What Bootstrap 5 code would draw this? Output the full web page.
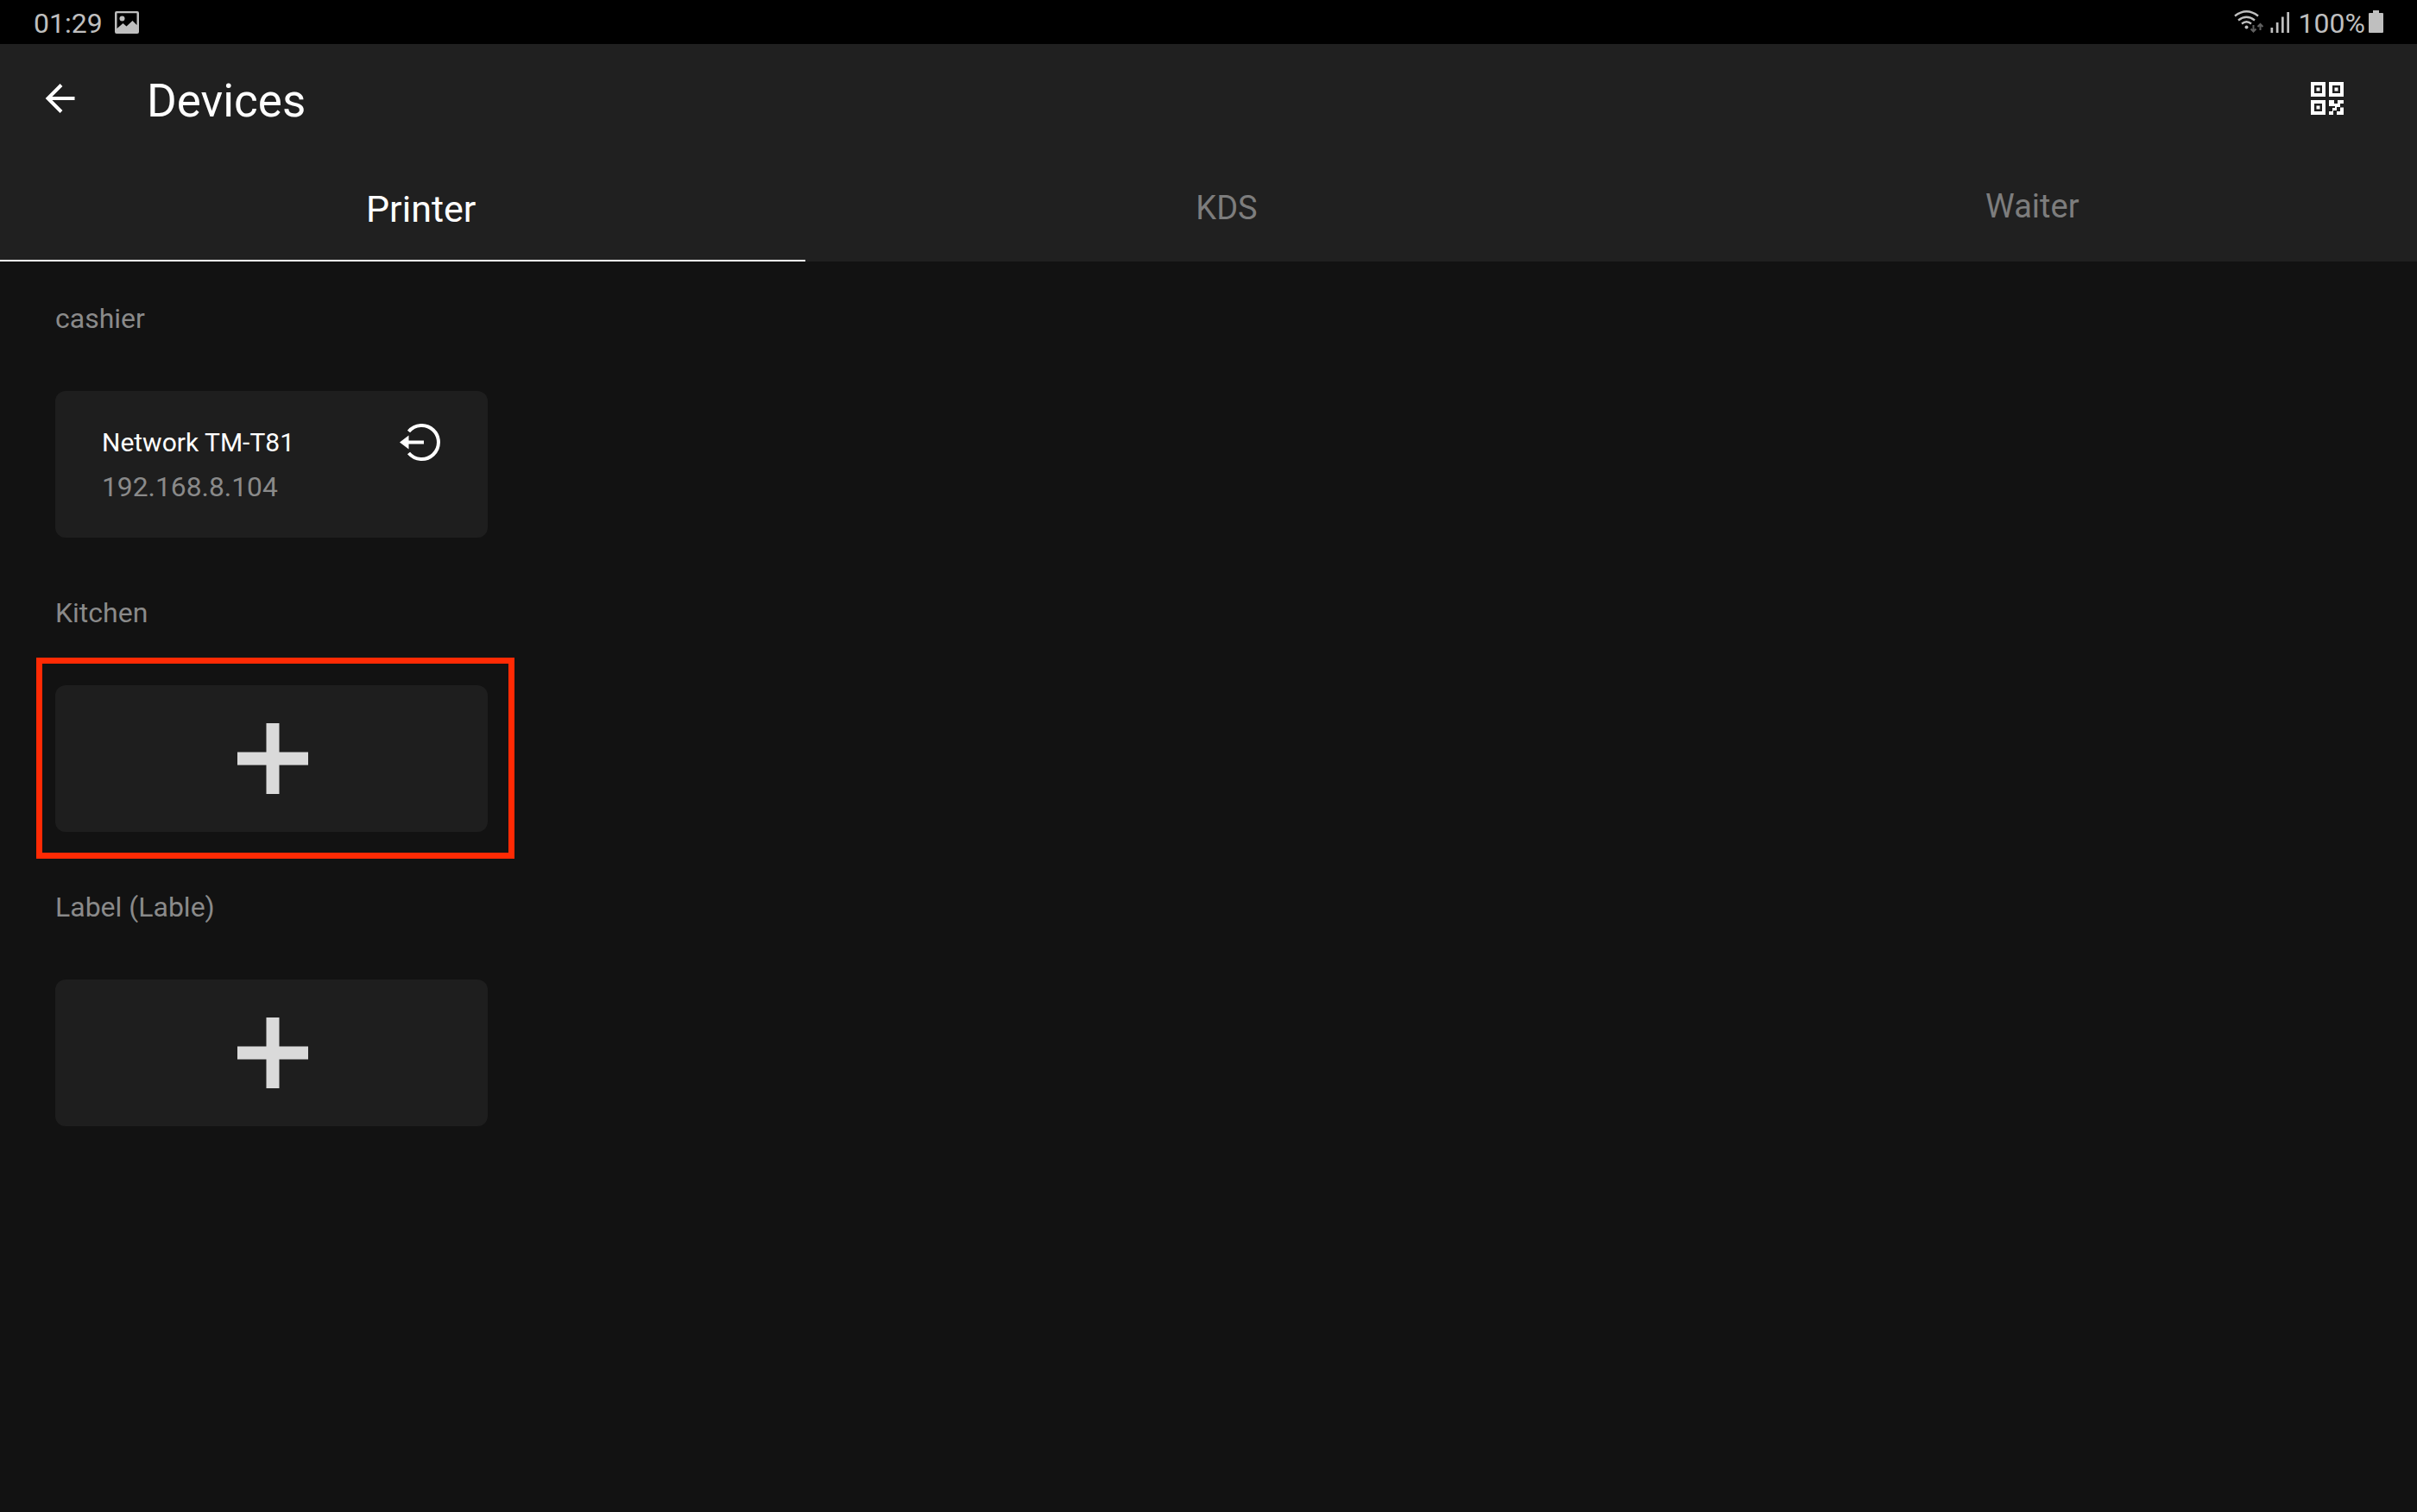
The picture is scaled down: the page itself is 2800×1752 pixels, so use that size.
<!DOCTYPE html>
<html lang="en">
<head>
    <meta charset="UTF-8">
    <meta name="viewport" content="width=device-width, initial-scale=1.0">
    <title>Devices</title>
    <link rel="stylesheet" href="https://cdn.jsdelivr.net/npm/bootstrap@5.3.0/dist/css/bootstrap.min.css">
    <style>
        body {
            background: #121212;
            color: #fff;
            font-family: Roboto, sans-serif;
            min-height: 100vh;
            overflow: hidden;
        }
        svg { display: block; flex: none; }

        /* status bar */
        .status-bar {
            height: 51px;
            padding: 0 39px 0 39px;
            background: #000;
            color: #bfbfbf;
            font-size: 32px;
            line-height: 54px;
        }
        .status-bar svg { margin-top: 12px; }
        .shot-icon { margin-left: 14px; }
        .signal-icon { margin-left: 5px; }
        .battery-text { margin-left: 10px; }
        .battery-icon { margin-left: 4px; }

        /* header */
        .app-header { background: #202020; height: 252px; }
        .title-bar { height: 125px; padding: 0 81px 0 49px; }
        .page-title { font-size: 53px; line-height: 118px; margin: 0 0 0 81px; padding-top: 7px; font-weight: 400; }

        .device-tabs { height: 127px; }
        .device-tabs .nav-link {
            height: 127px;
            padding: 0 0 0 42px;
            border-radius: 0;
            border-bottom: 2px solid transparent;
            color: #7d7d7d;
            font-size: 38px;
            line-height: 130px;
        }
        .device-tabs .nav-link.tab-waiter { line-height: 126px; }
        .device-tabs .nav-link.active { color: #fff; font-size: 43px; line-height: 132px; border-bottom-color: #fff; background: none; }

        /* printer groups */
        .device-list { padding: 46px 64px; }
        .device-group { width: 501px; height: 341px; }
        .group-name { color: #8a8a8a; font-size: 32px; line-height: 40px; margin: 0 0 64px; font-weight: 400; }
        .device-card { height: 170px; background: #1e1e1e; border: 0; border-radius: 12px; color: #fff; width: 100%; }
        .device-info { padding: 38px 54px; }
        .device-name { font-size: 30px; line-height: 44px; }
        .device-ip { font-size: 31.8px; line-height: 58px; color: #8a8a8a; }
        .plus-icon { margin-left: 2px; }
        .highlight {
            position: absolute;
            top: -32px;
            left: -22px;
            width: 554px;
            height: 233px;
            border: 7px solid #ff2a04;
            pointer-events: none;
        }
    </style>
</head>
<body>
    <div class="status-bar d-flex justify-content-between align-items-start">
        <div class="d-flex align-items-start">
            <span>01:29</span>
            <svg class="shot-icon" width="28" height="28" viewBox="0 0 28 28" fill="#bfbfbf">
                <path fill-rule="evenodd" d="M2 1h24a2 2 0 0 1 2 2v22a2 2 0 0 1-2 2H2a2 2 0 0 1-2-2V3a2 2 0 0 1 2-2zM2.500 3.300V21L9.500 15l4 3.500 7-6.500 5 5V3.300z"/>
                <circle cx="8.500" cy="9.500" r="3"/>
            </svg>
        </div>
        <div class="d-flex align-items-start">
            <svg width="36" height="28" viewBox="0 0 36 28" fill="none" stroke="#bfbfbf" stroke-width="2.300">
                <path d="M1 6.500Q14.500-4 28 6.500M5 11.500Q14.500 4 24 11.500M9 15.500Q14.500 11 20 15.500"/>
                <circle cx="14.500" cy="19.500" r="2" fill="#bfbfbf" stroke="none"/>
                <path stroke="#606060" stroke-width="2" d="M22.500 17v7M19.500 21.500l3 3 3-3M30.500 23v-7M27.500 19l3-3 3 3"/>
            </svg>
            <svg class="signal-icon" width="24" height="28" viewBox="0 0 24 28" fill="#bfbfbf">
                <path d="M1.500 20h2.700v6H1.500zM7.800 14h2.700v12H7.800zM14 7.500h2.700V26H14zM20.300 2H23v24h-2.700z"/>
            </svg>
            <span class="battery-text">100%</span>
            <svg class="battery-icon" width="17" height="28" viewBox="0 0 17 28" fill="#bfbfbf">
                <path d="M5 0h7v3h4q1 0 1 1v21q0 1-1 1H1q-1 0-1-1V4q0-1 1-1h4z"/>
            </svg>
        </div>
    </div>

    <header class="app-header">
        <div class="title-bar d-flex align-items-center">
            <a href="#" aria-label="Back">
                <svg width="40" height="40" viewBox="0 0 40 40" fill="none" stroke="#fff" stroke-width="4">
                    <path d="M37.500 20H6M22 4.500L6.500 20 22 35.500"/>
                </svg>
            </a>
            <h1 class="page-title">Devices</h1>
            <a href="#" class="ms-auto" aria-label="QR code">
                <svg width="42" height="40" viewBox="0 0 42 40" fill="#fff">
                    <path fill-rule="evenodd" d="M0 1h17v17H0zM4 5v9h9V5zM21 1h17v17H21zM25 5v9h9V5zM0 22h17v17H0zM4 26v9h9v-9z"/>
                    <path d="M6.500 7.500h4v4h-4zM27.500 7.500h4v4h-4zM6.500 28.500h4v4h-4z"/>
                    <path d="M21 22h6v4h4v-4h7v4h-4v4h-4v4h-4v5h-5v-4h4v-4h3v-2h-7zM34 30.500h4V39h-8v-4h4z"/>
                </svg>
            </a>
        </div>
        <nav class="nav nav-justified device-tabs">
            <a class="nav-link col active" href="#">Printer</a>
            <a class="nav-link col" href="#">KDS</a>
            <a class="nav-link col tab-waiter" href="#">Waiter</a>
        </nav>
    </header>

    <main class="device-list">
        <section class="device-group">
            <h2 class="group-name">cashier</h2>
            <div class="card device-card">
                <div class="device-info d-flex justify-content-between align-items-start">
                    <div>
                        <div class="device-name">Network TM-T81</div>
                        <div class="device-ip">192.168.8.104</div>
                    </div>
                    <svg width="48" height="44" viewBox="0 0 48 44" fill="none">
                        <path stroke="#fff" stroke-width="4" d="M10.500 9A19.500 19.500 0 1 1 10.500 34"/>
                        <path fill="#fff" d="M0 21.500L10.500 13.500v6H28v4H10.500v6z"/>
                    </svg>
                </div>
            </div>
        </section>

        <section class="device-group">
            <h2 class="group-name">Kitchen</h2>
            <div class="position-relative">
                <button type="button" class="device-card d-flex align-items-center justify-content-center p-0" aria-label="Add kitchen printer">
                    <svg class="plus-icon" width="82" height="82" viewBox="0 0 82 82" fill="#dadada">
                        <path d="M33.500 0h15v33.500H82v15H48.500V82h-15V48.500H0v-15h33.500z"/>
                    </svg>
                </button>
                <div class="highlight"></div>
            </div>
        </section>

        <section class="device-group">
            <h2 class="group-name">Label (Lable)</h2>
            <button type="button" class="device-card d-flex align-items-center justify-content-center p-0" aria-label="Add label printer">
                <svg class="plus-icon" width="82" height="82" viewBox="0 0 82 82" fill="#dadada">
                    <path d="M33.500 0h15v33.500H82v15H48.500V82h-15V48.500H0v-15h33.500z"/>
                </svg>
            </button>
        </section>
    </main>

    <script src="https://cdn.jsdelivr.net/npm/bootstrap@5.3.0/dist/js/bootstrap.bundle.min.js"></script>
</body>
</html>
